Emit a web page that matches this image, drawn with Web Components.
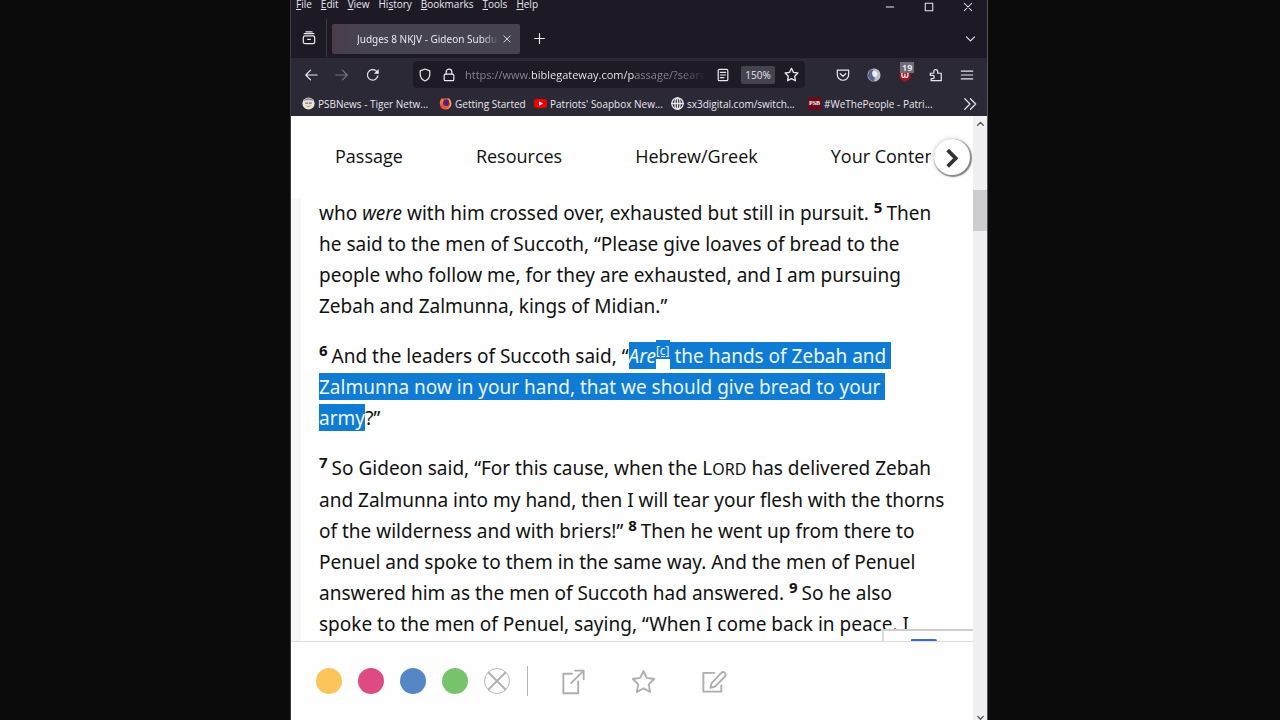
<!DOCTYPE html>
<html lang="en">
<head>
<meta charset="utf-8">
<title>Judges 8 NKJV - Gideon Subdues</title>
<style>
  html, body { height: 100%; }
  body {
    margin: 0;
    padding-right: 2px;
    box-sizing: border-box;
    background: #0b0b0b;
    font-family: "Open Sans", "Noto Sans", sans-serif;
    display: flex;
    justify-content: center;
    overflow: hidden;
  }
</style>
</head>
<body>

<browser-window>
  <menu-bar slot="chrome"></menu-bar>
  <tab-strip slot="chrome">Judges 8 NKJV - Gideon Subdues</tab-strip>
  <nav-toolbar slot="chrome"></nav-toolbar>
  <bookmarks-bar slot="chrome">
    <bookmark-link icon="face">PSBNews - Tiger Netw...</bookmark-link>
    <bookmark-link icon="firefox">Getting Started</bookmark-link>
    <bookmark-link icon="youtube">Patriots' Soapbox New...</bookmark-link>
    <bookmark-link icon="globe">sx3digital.com/switch...</bookmark-link>
    <bookmark-link icon="psb">#WeThePeople - Patri...</bookmark-link>
  </bookmarks-bar>
  <page-view>
    <site-nav slot="top"></site-nav>
    <passage-text></passage-text>
    <highlight-bar slot="bottom"></highlight-bar>
  </page-view>
</browser-window>

<script>
// Small drawings used all over the page
const ICONS = {
  recent: '<rect x="1.500" y="5.500" width="13" height="9" rx="2"/><path d="M2.500 3h11M6.500 9.500h3M4.500 1h7"/>',
  close: '<path d="M3 3l10 10M13 3L3 13"/>',
  plus: '<path d="M8 2v12M2 8h12"/>',
  minimize: '<path d="M3 8h10"/>',
  maximize: '<rect x="3" y="3" width="10" height="10"/>',
  down: '<path d="M3 6l5 5 5-5"/>',
  up: '<path d="M3 11l5-5 5 5"/>',
  back: '<path d="M15 8H2M7.500 2.500L2 8l5.500 5.500"/>',
  forward: '<path d="M1 8h13M8.500 2.500L14 8l-5.500 5.500"/>',
  reload: '<path d="M13.500 9A6 6 0 1 1 11.500 3.300L13.800 5.500"/><path d="M14.500 1v5.500H9z" fill="currentColor" stroke="none"/>',
  shield: '<path d="M8 1.200l5.500 2.100v3.500c0 4-2.200 6.600-5.500 8-3.300-1.400-5.500-4-5.500-8V3.300z"/>',
  lock: '<rect x="2.500" y="7" width="11" height="7.500" rx="1.500"/><path d="M4.800 7V4.500a3.200 3.200 0 0 1 6.400 0V7"/>',
  reader: '<rect x="2.500" y="1.500" width="11" height="13" rx="1.500"/><path d="M5 5h6M5 8h6M5 11h4"/>',
  star: '<path d="M8 1.300l2.100 4.400 4.700.7-3.400 3.400.8 4.900L8 12.400l-4.200 2.300.8-4.900L1.200 6.400l4.700-.7z"/>',
  pocket: '<path d="M1.500 2.500h13v5a6.500 6.500 0 0 1-13 0z"/><path d="M4.800 6.500L8 9.500l3.200-3"/>',
  account: '<circle cx="8" cy="8" r="7.500" fill="#b9bdcc" stroke="none"/><path d="M3 2.500C7 .5 9 3 7.500 5S6 8 8 10s0 5-1 5-6-2-6-7z" fill="#56658c" stroke="none"/><path d="M7 3c3 0 5 2 5 4s-2 4-4 3-3-5-1-7z" fill="#f2f1ec" stroke="none"/>',
  ublock: '<path d="M2 2h12v8c0 3-3 4-6 6-3-2-6-3-6-6z" fill="#a5161e" stroke="none"/><path d="M4.500 6v3a1.700 1.700 0 0 0 3.400 0V7M7.900 9a1.700 1.700 0 0 0 3.400 0V6" stroke="#fff"/>',
  extension: '<path d="M1.500 6h4V4a2.200 2.200 0 0 1 4.400 0v2H14v8.500H2.500v-2.300h1.600a1.900 1.900 0 0 0 0-3.800H1.500z"/>',
  menu: '<path d="M1.500 3.500h13M1.500 8h13M1.500 12.500h13"/>',
  more: '<path d="M2 2l6 6-6 6M8.500 2l6 6-6 6"/>',
  face: '<circle cx="8" cy="8" r="7.500" fill="#e9e4da" stroke="none"/><path d="M1.500 5C4 0 12 0 14.500 5 11 3.500 5 3.500 1.500 5z" fill="#8d96a8" stroke="none"/><path d="M4.500 7.500h2.500M9 7.500h2.500" stroke="#8d6f5f"/><path d="M4 10c2 3 6 3 8 0-2 1-6 1-8 0z" fill="#c8a071" stroke="none"/>',
  firefox: '<circle cx="8" cy="8.500" r="7" fill="#f0533d" stroke="none"/><path d="M1 8c0-4 2-6 3-7 0 2 2 2 3 3L5 8z" fill="#f5793b" stroke="none"/><circle cx="9" cy="7" r="4" fill="#4b2574" stroke="none"/><path d="M10 1c4 1 6 5 5 9-1 3-4 5-7 5 4-1 6-4 5-7 0-3-2-5-3-7z" fill="#ffa04b" stroke="none"/>',
  youtube: '<rect x="0" y="2.500" width="16" height="11" rx="3" fill="#f00000" stroke="none"/><path d="M6.300 5.300v5.400L11 8z" fill="#fff" stroke="none"/>',
  globe: '<circle cx="8" cy="8" r="7"/><ellipse cx="8" cy="8" rx="3.200" ry="7"/><path d="M8 1v14M1 8h14"/>',
  chevron: '<path d="M4.500 2.500l6.500 6.500-6.500 6.500" stroke-linecap="butt" stroke-linejoin="miter"/>',
  none: '<path d="M2.500 2.500l11 11M13.500 2.500l-11 11"/>',
  share: '<path d="M7 3H1.500v12.500h9.500V8M6.500 9L14.500 1M9 1h5.500v5.500"/>',
  note: '<path d="M8.500 2.500H1.500v12h11.500v-4M6 12l.8-3L13 2.500a1.500 1.500 0 0 1 2.300 2.300L9 11.300z"/>'
};

class UiIcon extends HTMLElement {
  connectedCallback() {
    const root = this.attachShadow({ mode: 'open' });
    const name = this.getAttribute('name');
    root.innerHTML = `
      <style>
        :host { display: inline-flex; flex: none; width: var(--size, 14px); height: var(--size, 14px); }
        svg { width: 100%; height: 100%; overflow: visible; fill: none; stroke: currentColor; stroke-width: var(--stroke, 1.4); stroke-linecap: round; stroke-linejoin: round; }
      </style>
      <svg viewBox="0 0 16 16" aria-hidden="true">${ICONS[name] || ''}</svg>
    `;
  }
}

// Reset shared by every component that holds buttons
const BUTTON_CSS = `
  button {
    border: 0; padding: 0; margin: 0; background: none; color: inherit; font: inherit;
    display: flex; align-items: center; justify-content: center; flex: none;
  }
`;

class BrowserWindow extends HTMLElement {
  connectedCallback() {
    this.attachShadow({ mode: 'open' }).innerHTML = `
      <style>
        :host {
          display: flex; flex-direction: column;
          flex: 0 1 698px; min-width: 0; height: 100%;
          box-sizing: border-box;
          border-left: 1px solid #3d3d3f; border-right: 1px solid #55545c;
        }
        header { flex: none; background: #1d1a26; color: #e8e7ee; font-size: 11px; line-height: 16px; }
        main { flex: 1; min-height: 0; display: flex; }
      </style>
      <header><slot name="chrome"></slot></header>
      <main><slot></slot></main>
    `;
  }
}

class MenuBar extends HTMLElement {
  connectedCallback() {
    this.attachShadow({ mode: 'open' }).innerHTML = `
      <style>
        ${BUTTON_CSS}
        :host { display: flex; justify-content: space-between; align-items: flex-start; height: 18px; }
        nav { display: flex; gap: 9px; padding-left: 5px; font-size: 10px; line-height: 9px; }
        nav button { display: block; }
        .controls { display: flex; height: 14px; align-items: center; }
        .controls button { width: 39px; }
        ui-icon { --size: 12px; }
      </style>
      <nav aria-label="Menu">
        <button><u>F</u>ile</button>
        <button><u>E</u>dit</button>
        <button><u>V</u>iew</button>
        <button>Hi<u>s</u>tory</button>
        <button><u>B</u>ookmarks</button>
        <button><u>T</u>ools</button>
        <button><u>H</u>elp</button>
      </nav>
      <div class="controls">
        <button aria-label="Minimize"><ui-icon name="minimize"></ui-icon></button>
        <button aria-label="Maximize"><ui-icon name="maximize"></ui-icon></button>
        <button aria-label="Close"><ui-icon name="close"></ui-icon></button>
      </div>
    `;
  }
}

class TabStrip extends HTMLElement {
  connectedCallback() {
    this.attachShadow({ mode: 'open' }).innerHTML = `
      <style>
        ${BUTTON_CSS}
        :host { display: flex; align-items: center; height: 40px; }
        .recent { width: 36px; height: 38px; border-right: 1px solid #3b3944; --size: 14px; }
        .tab {
          display: flex; align-items: center; gap: 3px;
          flex: 0 1 188px; min-width: 0; height: 30px; margin: 2px 0 0 5px;
          padding: 0 8px 0 25px; box-sizing: border-box;
          background: linear-gradient(90deg, #4a3d4a, #454350 40px); border-radius: 2px;
        }
        .title {
          flex: 1; overflow: hidden; white-space: nowrap;
          font-family: "Noto Sans", sans-serif; font-size: 10px;
          mask-image: linear-gradient(90deg, #000 88%, transparent);
        }
        .tab button { --size: 10px; }
        .add { width: 38px; --size: 13px; }
        .list { width: 34px; margin-left: auto; --size: 13px; }
      </style>
      <button class="recent" aria-label="Recent browsing"><ui-icon name="recent"></ui-icon></button>
      <div class="tab">
        <span class="title"><slot></slot></span>
        <button aria-label="Close tab"><ui-icon name="close"></ui-icon></button>
      </div>
      <button class="add" aria-label="New tab"><ui-icon name="plus"></ui-icon></button>
      <button class="list" aria-label="List all tabs"><ui-icon name="down"></ui-icon></button>
    `;
  }
}

class NavToolbar extends HTMLElement {
  connectedCallback() {
    this.attachShadow({ mode: 'open' }).innerHTML = `
      <style>
        ${BUTTON_CSS}
        :host {
          display: flex; align-items: center; height: 33px; padding: 0 5px 0 4px;
          background: #2b2936;
        }
        .tool { width: 31px; height: 31px; position: relative; }
        .off { color: #75737f; }
        .url {
          flex: 1; min-width: 0; display: flex; align-items: center;
          height: 27px; margin: 0 22px 0 25px;
          background: #1e1b27; border-radius: 4px;
        }
        .url button { width: 24px; }
        .url .page { width: 36px; }
        .url .zoom { width: 34px; height: 18px; background: #45434f; border-radius: 2px; font-size: 10px; }
        .url .mark { width: 28px; margin-left: 2px; --size: 15px; }
        input {
          flex: 1; min-width: 0; margin-left: 4px; padding: 0; border: 0; outline: 0;
          font: inherit; height: 18px;
          background: linear-gradient(90deg, #8b8995 66px, #f4f4f8 66px, #f4f4f8 170px, #8b8995 170px, #8b8995 215px, transparent 242px);
          background-clip: text; -webkit-background-clip: text;
          color: transparent;
        }
        .badge {
          position: absolute; left: 11px; top: 3px; padding: 0 2px;
          background: #6e6c76; color: #fff; font-size: 9px; line-height: 11px; font-weight: 600;
        }
      </style>
      <button class="tool" aria-label="Back"><ui-icon name="back"></ui-icon></button>
      <button class="tool off" aria-label="Forward"><ui-icon name="forward"></ui-icon></button>
      <button class="tool" aria-label="Reload"><ui-icon name="reload"></ui-icon></button>
      <div class="url">
        <button aria-label="Tracking protection"><ui-icon name="shield"></ui-icon></button>
        <button aria-label="Site information"><ui-icon name="lock"></ui-icon></button>
        <input aria-label="Address" value="https://www.biblegateway.com/passage/?search=Judges">
        <button class="page" aria-label="Reader view"><ui-icon name="reader"></ui-icon></button>
        <button class="zoom">150%</button>
        <button class="mark" aria-label="Bookmark this page"><ui-icon name="star"></ui-icon></button>
      </div>
      <button class="tool" aria-label="Pocket"><ui-icon name="pocket"></ui-icon></button>
      <button class="tool" aria-label="Account"><ui-icon name="account"></ui-icon></button>
      <button class="tool" aria-label="Blocker"><ui-icon name="ublock"></ui-icon><span class="badge">19</span></button>
      <button class="tool" aria-label="Extensions"><ui-icon name="extension"></ui-icon></button>
      <button class="tool" aria-label="Application menu"><ui-icon name="menu"></ui-icon></button>
    `;
  }
}

class BookmarksBar extends HTMLElement {
  connectedCallback() {
    this.attachShadow({ mode: 'open' }).innerHTML = `
      <style>
        ${BUTTON_CSS}
        :host {
          display: flex; align-items: center; height: 25px; padding: 0 10px 0 11px;
          background: #2b2936; box-sizing: border-box; font-size: 10px;
        }
        .items { flex: 1; min-width: 0; display: grid; grid-template-columns: 137px 95px 137px 137px 1fr; }
      </style>
      <div class="items"><slot></slot></div>
      <button aria-label="More bookmarks"><ui-icon name="more"></ui-icon></button>
    `;
  }
}

class BookmarkLink extends HTMLElement {
  connectedCallback() {
    const icon = this.getAttribute('icon');
    // the PSB site uses its initials as the favicon
    const mark = icon === 'psb' ? '<b aria-hidden="true">PSB</b>' : `<ui-icon name="${icon}"></ui-icon>`;
    this.attachShadow({ mode: 'open' }).innerHTML = `
      <style>
        :host { display: block; min-width: 0; }
        a { display: flex; align-items: center; gap: 3px; color: inherit; text-decoration: none; white-space: nowrap; }
        ui-icon { --size: 13px; --stroke: 1.6; }
        b {
          width: 13px; height: 13px; background: #6b0a1c; color: #fff;
          font: bold 6px/13px "Liberation Serif", serif; text-align: center;
        }
      </style>
      <a href="#">${mark}<span><slot></slot></span></a>
    `;
  }
}

class PageView extends HTMLElement {
  connectedCallback() {
    this.attachShadow({ mode: 'open' }).innerHTML = `
      <style>
        ${BUTTON_CSS}
        :host { display: flex; flex: 1; min-width: 0; background: #fefefe; color: #111; }
        .column { flex: 1; min-width: 0; display: flex; flex-direction: column; }
        .reading { flex: 1; min-height: 0; overflow: hidden; position: relative; }
        .captcha {
          position: absolute; right: 0; bottom: 0; width: 91px; height: 12px; box-sizing: border-box;
          border-top: 2px solid #cfccd1; border-left: 2px solid #dcdade;
          display: flex; justify-content: center; align-items: flex-end; padding-right: 10px;
        }
        .captcha i { width: 26px; height: 2px; background: #4468c8; border-radius: 3px 8px 0 0; }
        .scroll {
          flex: none; width: 14px; background: #f0eff1; color: #55545a; --size: 9px; --stroke: 2.4;
          display: flex; flex-direction: column;
        }
        .scroll button { height: 14px; }
        .scroll button:last-child { height: 6px; }
        .track { flex: 1; display: grid; grid-template-rows: 1fr 41px 8fr; }
        .thumb { grid-row: 2; background: #cdccce; }
      </style>
      <div class="column">
        <slot name="top"></slot>
        <div class="reading">
          <div class="captcha"><i></i></div>
          <slot></slot>
        </div>
        <slot name="bottom"></slot>
      </div>
      <div class="scroll">
        <button aria-label="Scroll up"><ui-icon name="up"></ui-icon></button>
        <div class="track"><div class="thumb"></div></div>
        <button aria-label="Scroll down"><ui-icon name="down"></ui-icon></button>
      </div>
    `;
  }
}

class SiteNav extends HTMLElement {
  connectedCallback() {
    this.attachShadow({ mode: 'open' }).innerHTML = `
      <style>
        ${BUTTON_CSS}
        :host { display: flex; align-items: center; flex: none; height: 82px; }
        nav { flex: 1; min-width: 0; overflow: hidden; display: flex; gap: 73px; padding: 0 0 2px 44px; }
        a { flex: none; color: inherit; text-decoration: none; font-size: 18px; line-height: 26px; white-space: nowrap; }
        button {
          width: 36px; height: 36px; margin: 0 3px; border-radius: 50%;
          background: #fff; color: #333; box-shadow: 1px 1px 1px 1px #888, 0 0 4px 1px #ddd;
          --size: 20px; --stroke: 3;
        }
      </style>
      <nav aria-label="Site">
        <a href="#">Passage</a>
        <a href="#">Resources</a>
        <a href="#">Hebrew/Greek</a>
        <a href="#">Your Content</a>
      </nav>
      <button aria-label="Next"><ui-icon name="chevron"></ui-icon></button>
    `;
  }
}

class PassageText extends HTMLElement {
  connectedCallback() {
    this.attachShadow({ mode: 'open' }).innerHTML = `
      <style>
        :host {
          display: block; box-sizing: border-box; min-height: 100%;
          padding-left: 18px; border-left: 10px solid #f7f7f8;
          font-family: "Noto Sans", sans-serif;
          font-size: 19px; line-height: 31px; white-space: nowrap;
        }
        p { margin: 0 0 19px; }
        sup { line-height: 0; vertical-align: 7px; font-size: 15px; font-weight: 700; padding-right: 4px; }
        mark, .note { background: #107bd3; color: #e9f6ff; padding-top: 1px; }
        mark.wrap { padding-right: 5px; }
        /* the note mark carries its own, shorter highlight */
        .note { font-size: 12px; font-weight: 400; padding: 2px 0 0; vertical-align: 8px; }
        .note a { color: inherit; }
        .sc { font-size: 16px; }
      </style>
      <p>who <i>were</i> with him crossed over, exhausted but still in pursuit. <sup>5</sup>Then<br>
      he said to the men of Succoth, “Please give loaves of bread to the<br>
      people who follow me, for they are exhausted, and I am pursuing<br>
      Zebah and Zalmunna, kings of Midian.”</p>
      <p><sup>6</sup>And the leaders of Succoth said, “<mark><i>Are</i></mark><sup class="note"><a href="#">[c]</a></sup><mark class="wrap"> the hands of Zebah and</mark><br>
      <mark class="wrap">Zalmunna now in your hand, that we should give bread to your</mark><br>
      <mark>army</mark>?”</p>
      <p><sup>7</sup>So Gideon said, “For this cause, when the L<span class="sc">ORD</span> has delivered Zebah<br>
      and Zalmunna into my hand, then I will tear your flesh with the thorns<br>
      of the wilderness and with briers!” <sup>8</sup>Then he went up from there to<br>
      Penuel and spoke to them in the same way. And the men of Penuel<br>
      answered him as the men of Succoth had answered. <sup>9</sup>So he also<br>
      spoke to the men of Penuel, saying, “When I come back in peace. I</p>
    `;
  }
}

class HighlightBar extends HTMLElement {
  connectedCallback() {
    this.attachShadow({ mode: 'open' }).innerHTML = `
      <style>
        ${BUTTON_CSS}
        :host {
          display: flex; align-items: center; flex: none; height: 79px; box-sizing: border-box;
          padding-left: 25px; border-top: 1px solid #dedee0; color: #aeadb0;
        }
        .colors { display: flex; gap: 16px; padding-right: 17px; border-right: 1px solid #b5b4b8; height: 30px; align-items: center; }
        .colors button { width: 26px; height: 26px; border-radius: 50%; background: var(--c); }
        .colors .clear { border: 1px solid #b9b8bb; box-sizing: border-box; --size: 24px; --stroke: 1.2; }
        .actions { display: flex; padding-left: 10px; --size: 25px; --stroke: 1.2; }
        .actions button { width: 70px; height: 30px; }
      </style>
      <div class="colors">
        <button aria-label="Yellow" style="--c:#fcc55c"></button>
        <button aria-label="Pink" style="--c:#de4a82"></button>
        <button aria-label="Blue" style="--c:#5586c6"></button>
        <button aria-label="Green" style="--c:#78c46c"></button>
        <button class="clear" aria-label="Remove highlight"><ui-icon name="none"></ui-icon></button>
      </div>
      <div class="actions">
        <button aria-label="Share"><ui-icon name="share"></ui-icon></button>
        <button aria-label="Favorite"><ui-icon name="star"></ui-icon></button>
        <button aria-label="Add note"><ui-icon name="note"></ui-icon></button>
      </div>
    `;
  }
}

customElements.define('ui-icon', UiIcon);
customElements.define('browser-window', BrowserWindow);
customElements.define('menu-bar', MenuBar);
customElements.define('tab-strip', TabStrip);
customElements.define('nav-toolbar', NavToolbar);
customElements.define('bookmarks-bar', BookmarksBar);
customElements.define('bookmark-link', BookmarkLink);
customElements.define('page-view', PageView);
customElements.define('site-nav', SiteNav);
customElements.define('passage-text', PassageText);
customElements.define('highlight-bar', HighlightBar);
</script>
</body>
</html>
